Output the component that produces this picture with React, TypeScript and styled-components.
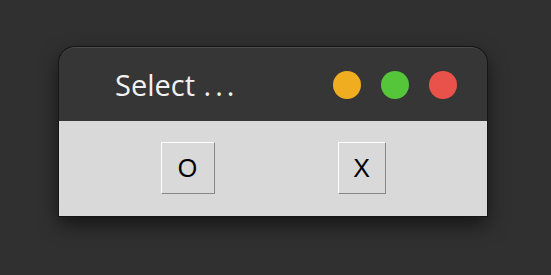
import React from "react";
import styled, { createGlobalStyle } from "styled-components";

const Global = createGlobalStyle`
  html, body { margin: 0; padding: 0; background: #303030; }
  body { width: 551px; height: 275px; overflow: hidden; }
`;

const Page = styled.div`
  padding: 47px 0 0 59px;
`;

const Window = styled.div`
  width: 428px;
  border-radius: 16px 16px 0 0;
  box-shadow: 0 0 0 1px #161616, 0 8px 20px rgba(0, 0, 0, 0.6);
  overflow: hidden;
  display: flex;
  flex-direction: column;
`;

const TitleBar = styled.div`
  height: 74px;
  box-sizing: border-box;
  background: #363636;
  border-top: 1px solid #4a4a4a;
  border-radius: 16px 16px 0 0;
  display: flex;
  align-items: center;
  padding: 0 30px 0 56px;
`;

const Title = styled.div`
  flex: 1;
  color: #f2f2f2;
  font-family: "Open Sans", "DejaVu Sans", sans-serif;
  font-size: 29px;
  letter-spacing: 0px;
  line-height: 1;
  margin-top: -1px;
`;

const Ellipsis = styled.span`
  letter-spacing: 4px;
  margin-left: 1px;
`;

const Dots = styled.div`
  display: flex;
  gap: 20px;
  align-items: center;
`;

const Dot = styled.div<{ $c: string }>`
  width: 28px;
  height: 28px;
  border-radius: 50%;
  background: ${(p) => p.$c};
`;

const Body = styled.div`
  height: 95px;
  background: #d9d9d9;
  display: flex;
  justify-content: center;
  align-items: flex-start;
  gap: 123px;
  padding-top: 21px;
  box-sizing: border-box;
`;

const Btn = styled.div<{ $w: number }>`
  width: ${(p) => p.$w}px;
  height: 52px;
  box-sizing: border-box;
  background: #d9d9d9;
  border-top: 1px solid #ffffff;
  border-left: 1px solid #ffffff;
  border-right: 1px solid #888888;
  border-bottom: 1px solid #888888;
  display: flex;
  align-items: center;
  justify-content: center;
  font-family: "Liberation Sans", Arial, sans-serif;
  font-size: 25px;
  color: #000;
`;

export default function App() {
  return (
    <>
      <Global />
      <Page>
        <Window>
          <TitleBar>
            <Title>
              Select <Ellipsis>...</Ellipsis>
            </Title>
            <Dots>
              <Dot $c="#f0ad20" />
              <Dot $c="#55c639" />
              <Dot $c="#e9524b" />
            </Dots>
          </TitleBar>
          <Body>
            <Btn $w={54}>O</Btn>
            <Btn $w={48}>X</Btn>
          </Body>
        </Window>
      </Page>
    </>
  );
}
